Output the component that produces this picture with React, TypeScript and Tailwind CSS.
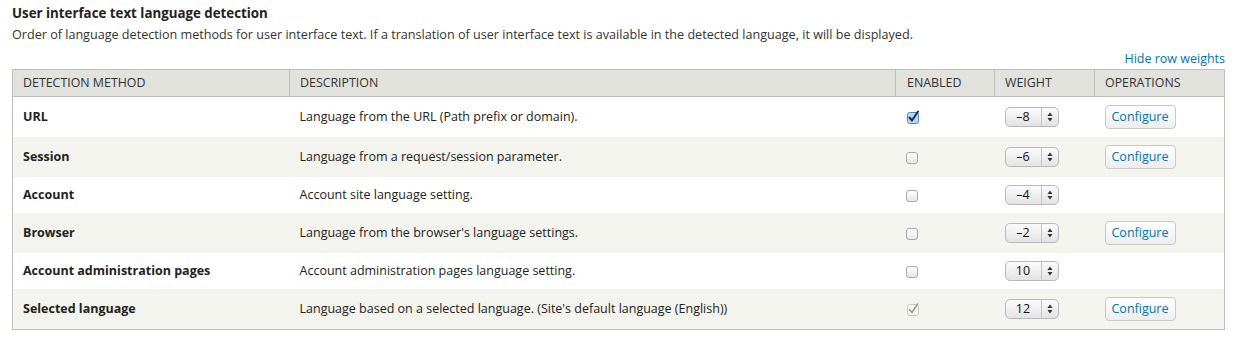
import React from 'react';

type Row = {
  name: string;
  description: string;
  enabled: boolean;
  locked?: boolean;
  weight: string;
  configurable: boolean;
};

const rows: Row[] = [
  { name: 'URL', description: 'Language from the URL (Path prefix or domain).', enabled: true, weight: '-8', configurable: true },
  { name: 'Session', description: 'Language from a request/session parameter.', enabled: false, weight: '-6', configurable: true },
  { name: 'Account', description: 'Account site language setting.', enabled: false, weight: '-4', configurable: false },
  { name: 'Browser', description: "Language from the browser's language settings.", enabled: false, weight: '-2', configurable: true },
  { name: 'Account administration pages', description: 'Account administration pages language setting.', enabled: false, weight: '10', configurable: false },
  { name: 'Selected language', description: "Language based on a selected language. (Site's default language (English))", enabled: true, locked: true, weight: '12', configurable: true },
];

function Checkbox({ checked, locked }: { checked: boolean; locked?: boolean }) {
  if (checked && !locked) {
    return (
      <svg width="14" height="14" viewBox="0 0 14 14" className="block">
        <rect x="1.5" y="2.5" width="11" height="11" rx="2" fill="#b8d8f8" stroke="#5b84b3" />
        <path d="M3.5 7.5 L6 10.5 L12 1.5" fill="none" stroke="#1b2a44" strokeWidth="2" strokeLinecap="round" strokeLinejoin="round" />
      </svg>
    );
  }
  if (checked && locked) {
    return (
      <svg width="14" height="14" viewBox="0 0 14 14" className="block">
        <rect x="1.5" y="2.5" width="11" height="11" rx="2" fill="#f4f4f1" stroke="#c8c8c4" />
        <path d="M3.5 7.5 L6 10.5 L11.5 2" fill="none" stroke="#9a9a98" strokeWidth="1.6" strokeLinecap="round" strokeLinejoin="round" />
      </svg>
    );
  }
  return (
    <span className="block w-[12px] h-[12px] mt-[2px] rounded-[3px] border border-[#a9a9a9] bg-gradient-to-b from-white to-[#e6e6e6]" />
  );
}

function WeightSelect({ value }: { value: string }) {
  return (
    <div className="flex h-[20px] w-[54px] items-stretch rounded-[5px] border border-[#b9b9b9] bg-gradient-to-b from-[#fbfbfb] to-[#e3e3e3] text-[12.5px] text-[#111]">
      <span className="flex w-[36px] items-center justify-center border-r border-[#c4c4c4]">
        {value.replace('-', '\u2013')}
      </span>
      <span className="flex flex-1 items-center justify-center">
        <svg width="6" height="10" viewBox="0 0 6 10">
          <path d="M3 0.5 L5.5 4 L0.5 4 Z" fill="#333" />
          <path d="M3 9.5 L5.5 6 L0.5 6 Z" fill="#333" />
        </svg>
      </span>
    </div>
  );
}

export default function App() {
  return (
    <div className="bg-white pl-[12px] pr-[20px] pt-[4px] pb-[14px] font-['Open_Sans',sans-serif] text-[#222]">
      <h2 className="text-[13.3px] font-bold leading-[18px] text-[#222]">User interface text language detection</h2>
      <p className="mt-[4px] text-[12.6px] leading-[18px] text-[#333]">
        Order of language detection methods for user interface text. If a translation of user interface text is available in the detected language, it will be displayed.
      </p>
      <div className="mt-[7px] flex justify-end">
        <a href="#" className="text-[12.5px] leading-[15px] text-[#0074bd]">Hide row weights</a>
      </div>
      <table className="mt-[3px] w-[1213px] border-collapse border border-[#bfbfba] text-[12.5px]">
        <thead>
          <tr className="h-[27px] bg-[#e1e2dc] text-left text-[12.4px] uppercase text-[#333]">
            <th className="w-[277px] border border-[#bfbfba] px-[10px] font-normal">Detection method</th>
            <th className="w-[606px] border border-[#bfbfba] px-[10px] font-normal">Description</th>
            <th className="w-[99px] border border-[#bfbfba] px-[11px] font-normal">Enabled</th>
            <th className="w-[100px] border border-[#bfbfba] px-[10px] font-normal">Weight</th>
            <th className="border border-[#bfbfba] px-[10px] font-normal">Operations</th>
          </tr>
        </thead>
        <tbody>
          {rows.map((row, i) => (
            <tr key={row.name} className={i % 2 === 1 ? 'bg-[#f3f4ee]' : 'bg-white'}>
              <td className="px-[10px] py-[8px] font-bold text-[#222]">{row.name}</td>
              <td className="px-[10px] py-[8px] text-[#222]">{row.description}</td>
              <td className="px-[10px] py-[8px]">
                <Checkbox checked={row.enabled} locked={row.locked} />
              </td>
              <td className="px-[10px] py-[8px]">
                <WeightSelect value={row.weight} />
              </td>
              <td className="px-[10px] py-[8px]">
                {row.configurable && (
                  <button className="h-[24px] w-[71px] rounded-[4px] border border-[#c9c9c9] bg-gradient-to-b from-white to-[#ededed] text-[12.5px] text-[#0074bd]">
                    Configure
                  </button>
                )}
              </td>
            </tr>
          ))}
        </tbody>
      </table>
    </div>
  );
}
